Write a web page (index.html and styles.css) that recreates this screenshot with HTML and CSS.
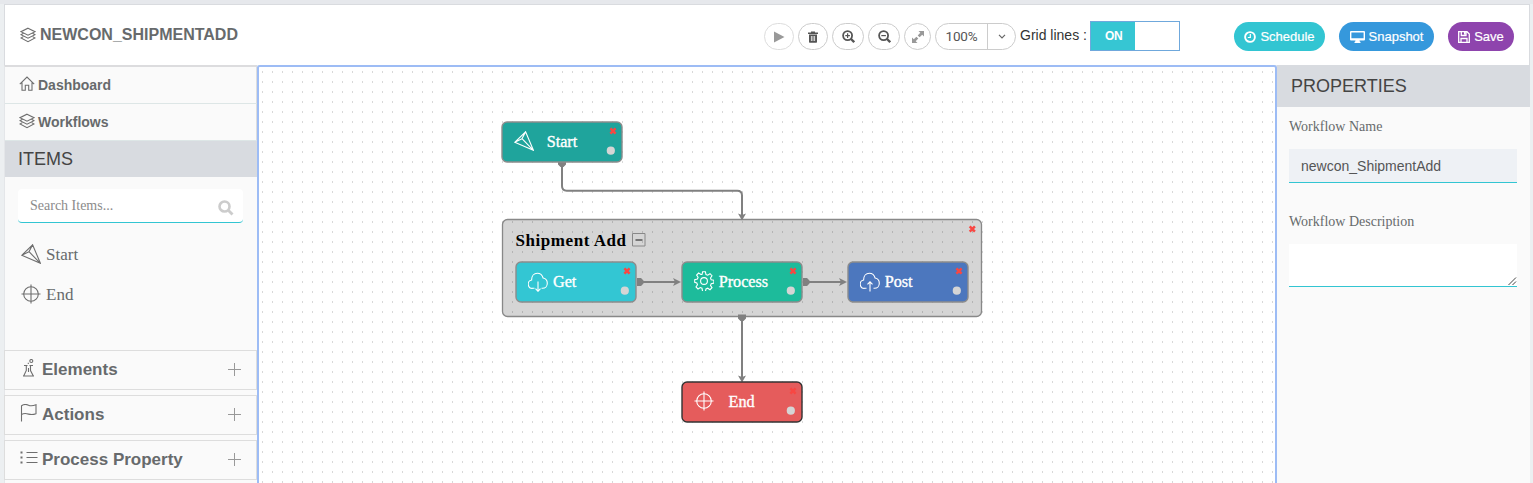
FILE: index.html
```html
<!DOCTYPE html>
<html lang="en">
<head>
<meta charset="utf-8">
<title>Workflow designer</title>
<link rel="stylesheet" href="styles.css">
</head>
<body>
<svg class="defs" width="0" height="0">
  <defs>
    <symbol id="layers" viewBox="0 0 16 16"><path d="M8 1.2 15 4.7 8 8.2 1 4.7ZM3.3 6.3 1 7.7 8 11.2l7-3.5-2.3-1.4M3.3 9.6 1 11 8 14.7l7-3.7-2.3-1.4"/></symbol>
    <symbol id="plane" viewBox="0 0 20 20"><path d="M.7 11.3 11.6.8 19.4 19.3ZM11.6.8 8 7.7 19.4 19.3M8 7.7.7 11.3"/></symbol>
    <symbol id="target" viewBox="0 0 20 20"><circle cx="10" cy="10" r="7.3"/><path d="M10 .5v19M.5 10h19"/></symbol>
    <symbol id="cloud-down" viewBox="0 0 20 20"><path d="M6.5 16.3H4.8A4.2 4.2 0 0 1 3.6 8C3.6 4 6 1.2 9.3 1.2c3 0 5 1.8 5.8 4.8 2.5.5 4.2 2.6 4.2 5.2 0 2.9-2 5.1-4.8 5.1h-1M10 9.5v9.7M7.5 16.7l2.5 2.6 2.5-2.6"/></symbol>
    <symbol id="cloud-up" viewBox="0 0 20 20"><path d="M6.500 16.3H4.8A4.2 4.2 0 0 1 3.6 8C3.6 4 6 1.2 9.3 1.2c3 0 5 1.8 5.8 4.8 2.5.5 4.2 2.6 4.2 5.2 0 2.9-2 5.1-4.8 5.1h-1M10 19.5V10M7.5 12.4 10 9.8l2.5 2.6"/></symbol>
    <symbol id="gear" viewBox="0 0 20 20"><circle cx="10" cy="10" r="3.4"/><path d="M8.6.8h2.8l.6 2.7 1.7.7 2.3-1.5 2 2-1.500 2.300.7 1.700 2.700.6v2.800l-2.700.6-.7 1.700 1.500 2.300-2 2-2.300-1.500-1.700.7-.6 2.700H8.600L8 17.200l-1.700-.7L4 18l-2-2 1.500-2.300-.7-1.700L.7 11.400V8.600L3.400 8l.7-1.700L2.600 4l2-2 2.300 1.500L8 3.500Z"/></symbol>
    <symbol id="cross" viewBox="0 0 8 8"><path d="M1.4 1.4 6.6 6.6M6.600 1.400 1.400 6.600" stroke="#f84743" stroke-width="2.5"/></symbol>
    <pattern id="grid" x="2" y="1" width="10" height="10" patternUnits="userSpaceOnUse"><rect width="1" height="2" fill="#d8d8d8"/></pattern>
  </defs>
</svg>
<div class="app">
  <header class="topbar">
    <h1 class="title"><svg class="line" width="16" height="16"><use href="#layers"/></svg>NEWCON_SHIPMENTADD</h1>
    <div class="tools">
      <button class="tool tool-faint"><svg width="12" height="12" viewBox="0 0 12 12"><path d="M1 .5 11.500 6 1 11.500Z" fill="#999"/></svg></button>
      <button class="tool"><svg width="12" height="12" viewBox="0 0 12 12"><path d="M4 1.500V.5h4v1h3V3H1V1.500ZM2 3.500h8V11q0 .7-.7.7H2.700Q2 11.700 2 11Z" fill="#555"/><path d="M4.400 5v5M6 5v5M7.600 5v5" stroke="#fff" stroke-width=".8"/></svg></button>
      <button class="tool tool-wide"><svg width="13" height="13" viewBox="0 0 13 13" fill="none" stroke="#555" stroke-width="1.800"><circle cx="5.600" cy="5.600" r="4.500"/><path d="m9 9 3.200 3.200" stroke-width="2.300"/><path d="M3.300 5.600h4.600M5.600 3.300v4.600" stroke-width="1.200"/></svg></button>
      <button class="tool tool-wide"><svg width="13" height="13" viewBox="0 0 13 13" fill="none" stroke="#555" stroke-width="1.800"><circle cx="5.600" cy="5.600" r="4.500"/><path d="m9 9 3.200 3.200" stroke-width="2.300"/><path d="M3.300 5.600h4.600" stroke-width="1.200"/></svg></button>
      <button class="tool tool-narrow"><svg width="12" height="12" viewBox="0 0 12 12"><path d="M6.500 0H12v5.500L10.200 3.700 7.600 6.300 5.700 4.400 8.300 1.800ZM5.500 12H0V6.500L1.800 8.300 4.400 5.700 6.300 7.600 3.700 10.200Z" fill="#999"/></svg></button>
      <div class="zoom"><span class="zoom-value">100%</span><span class="zoom-more"><svg width="8" height="5" viewBox="0 0 8 5"><path d="m1 .8 3 3 3-3" fill="none" stroke="#666" stroke-width="1.200"/></svg></span></div>
      <span class="grid-label">Grid lines :</span>
      <div class="toggle"><span class="toggle-on">ON</span></div>
    </div>
    <div class="actions">
      <button class="pill pill-schedule"><svg width="12" height="12" viewBox="0 0 12 12" fill="none" stroke="#fff"><circle cx="6" cy="6" r="4.900" stroke-width="1.900"/><path d="M6.300 3v3.500H3.800" stroke-width="1.200"/></svg>Schedule</button>
      <button class="pill pill-snapshot"><svg width="15" height="12" viewBox="0 0 15 12"><path d="M1 0h13q1 0 1 1v7.500q0 1-1 1H9.500q0 1.300 1 1.500v1h-6v-1q1-.2 1-1.500H1q-1 0-1-1V1q0-1 1-1ZM1.400 1.400v5.800h12.200V1.400Z" fill="#fff" fill-rule="evenodd"/></svg>Snapshot</button>
      <button class="pill pill-save"><svg width="12" height="12" viewBox="0 0 12 12" fill="none" stroke="#fff" stroke-width="1.300"><path d="M.7.7h8.300l2.300 2.300v8.300H.7ZM3 11V7.500h6V11M3.300 1v3.500h4.700V1M6.600 1v2.500"/></svg>Save</button>
    </div>
  </header>

  <aside class="sidebar">
    <a class="nav"><svg class="line" width="16" height="16" viewBox="0 0 16 16"><path d="M.8 8.200 8 1l7.200 7.200M3 6.500v7.800h3.300V9.300h3.400v5H13V6.500"/></svg>Dashboard</a>
    <a class="nav"><svg class="line" width="16" height="16"><use href="#layers"/></svg>Workflows</a>
    <h2 class="section items-head">ITEMS</h2>
    <div class="palette">
      <div class="search"><span>Search Items...</span><svg width="16" height="16" viewBox="0 0 16 16" fill="none" stroke="#ccc"><circle cx="6.500" cy="6.500" r="5" stroke-width="2.600"/><path d="m10.500 10.500 4 4" stroke-width="2.800"/></svg></div>
      <div class="item"><svg class="line" width="20" height="20"><use href="#plane"/></svg>Start</div>
      <div class="item"><svg class="line" width="20" height="20"><use href="#target"/></svg>End</div>
    </div>
    <div class="accordion">
      <div class="group"><svg class="line" width="18" height="18" viewBox="0 0 18 18"><path d="M4 6.500h3.500M9.500 6.500H13M6.300 6.500v5L3.800 16.800M10.500 6.500v5L13.200 16.800M3 17h11M8.500 9v4M8.300 3.800v1.200"/><circle cx="11.300" cy="2" r="1.500"/></svg><span>Elements</span><i class="plus"></i></div>
      <div class="group"><svg class="line" width="18" height="18" viewBox="0 0 18 18"><path d="M1.500 17.500V1.500M1.500 1.700C4 0 6.500.3 8.500 1.200s4 .9 7.500-.5v9c-3.500 1.400-5.500 1-7.500.4s-4.500-1-7 .4"/></svg><span>Actions</span><i class="plus"></i></div>
      <div class="group"><svg class="line" width="18" height="18" viewBox="0 0 18 18"><path d="M6.500 3.500h11M6.500 8.500h11M6.500 13.500h11"/><path d="M.5 3.500h2M.5 8.500h2M.5 13.500h2" stroke-width="2"/></svg><span>Process Property</span><i class="plus"></i></div>
    </div>
  </aside>

  <main class="canvas">
    <svg class="diagram" viewBox="259 67 1016 416">
      <rect x="259" y="67" width="1016" height="416" fill="url(#grid)"/>
      <rect x="502.500" y="219.500" width="479" height="97" rx="5" fill="#000" fill-opacity=".165" stroke="#888" stroke-width="1.300"/>
      <g class="links">
        <path d="M562 165v21q0 4.700 4.700 4.700h170.600q4.700 0 4.700 4.700V218M742 319v61M643 282h33M809 282h33"/>
      </g>
      <g fill="#808080">
        <path d="M558 160.500h8v4l-2.500 2.500h-3l-2.500-2.500ZM738 314.500h8v4l-2.500 2.500h-3l-2.500-2.500ZM637 278h4l2.500 2.500v3L641 286h-4ZM803 278h4l2.500 2.500v3L807 286h-4Z"/>
        <path d="M738 213.500l4 1.500 4-1.500-4 7ZM738 375.500l4 1.500 4-1.500-4 7ZM673 278l8 4-8 4 2-4ZM839 278l8 4-8 4 2-4Z"/>
      </g>
      <g stroke="#8c8c8c" stroke-width="1.400">
        <rect x="502" y="122" width="120" height="40" rx="5" fill="#1fa49c"/>
        <rect x="516" y="262" width="120" height="40" rx="5" fill="#33c6d3"/>
        <rect x="682" y="262" width="120" height="40" rx="5" fill="#1dbb9b"/>
        <rect x="848" y="262" width="120" height="40" rx="5" fill="#4c77be"/>
        <rect x="682" y="382" width="120" height="40" rx="5" fill="#e55c5c" stroke="#333"/>
      </g>
      <g class="node-icons">
        <use href="#plane" x="514" y="131" width="20" height="20"/>
        <use href="#cloud-down" x="528" y="272" width="20" height="20"/>
        <use href="#gear" x="694" y="271" width="20" height="20"/>
        <use href="#cloud-up" x="860" y="272" width="20" height="20"/>
        <use href="#target" x="694" y="391" width="20" height="20"/>
      </g>
      <g class="node-text">
        <text x="546.700" y="147">Start</text>
        <text x="553" y="287">Get</text>
        <text x="718.700" y="287">Process</text>
        <text x="884.700" y="287">Post</text>
        <text x="728.500" y="407">End</text>
      </g>
      <text class="group-text" x="515.500" y="246">Shipment Add</text>
      <path d="M632.500 233.500h12.500v12.500h-12.500Z" fill="none" stroke="#888"/>
      <path d="M635.500 240h7" stroke="#555" stroke-width="1.500"/>
      <g fill="#d5d5d5">
        <circle cx="610.800" cy="150.700" r="4.100"/><circle cx="624.800" cy="290.700" r="4.100"/><circle cx="790.800" cy="290.700" r="4.100"/><circle cx="956.800" cy="290.700" r="4.100"/><circle cx="790.800" cy="410.700" r="4.100"/>
      </g>
      <use href="#cross" x="609" y="127" width="8" height="8"/>
      <use href="#cross" x="623" y="267" width="8" height="8"/>
      <use href="#cross" x="789" y="267" width="8" height="8"/>
      <use href="#cross" x="955" y="267" width="8" height="8"/>
      <use href="#cross" x="968.300" y="225" width="8" height="8"/>
      <use href="#cross" x="789" y="387" width="8" height="8"/>
    </svg>
  </main>

  <aside class="properties">
    <h2 class="section">PROPERTIES</h2>
    <div class="form">
      <label class="label">Workflow Name</label>
      <div class="field">newcon_ShipmentAdd</div>
      <label class="label">Workflow Description</label>
      <div class="area"><svg width="9" height="9" viewBox="0 0 9 9"><path d="M.5 8l7.500-7.500M4.500 8l3.500-3.500" stroke="#444"/></svg></div>
    </div>
  </aside>
</div>
</body>
</html>
```
FILE: styles.css
```css
* { box-sizing: border-box; }
body {
  margin: 0;
  padding: 4px 3px 0 4px;
  height: 483px;
  overflow: hidden;
  background: linear-gradient(#e6e8ec 0 4px, #eceff1 4px);
  font-family: "Liberation Sans", Arial, sans-serif;
  color: #676a6c;
}
.defs { position: absolute; }
svg { display: block; flex: none; }
button { border: 0; padding: 0; font: inherit; }
.line { fill: none; stroke: #6e6e6e; stroke-width: 1.1; }

.app {
  display: grid;
  grid-template-columns: 253px 1020px 253px;
  grid-template-rows: 61px 418px;
}
.topbar {
  grid-column: 1 / -1;
  display: flex;
  align-items: center;
  background: #fff;
  border: 1px solid #d9dbdf;
  border-bottom: 0;
}
.title {
  display: flex;
  align-items: center;
  gap: 4px;
  width: 759px;
  margin: 0;
  padding-left: 15px;
  font-size: 16px;
  line-height: 20px;
}
.tools { display: flex; align-items: center; gap: 4px; width: 470px; padding-top: 3px; }
.tool {
  display: flex;
  align-items: center;
  justify-content: center;
  width: 30px;
  height: 27px;
  border: 1px solid #ccc;
  border-radius: 14px;
  background: #fff;
}
.tool-faint { border-color: #ddd; }
.tool-wide { width: 32px; }
.tool-narrow { width: 27px; }
.zoom {
  display: flex;
  width: 81px;
  height: 27px;
  border: 1px solid #ccc;
  border-radius: 14px;
  font: 13.5px/25px Roboto, sans-serif;
  letter-spacing: -.2px;
  color: #555;
}
.zoom-value { width: 52px; text-align: center; border-right: 1px solid #ccc; }
.zoom-more { display: flex; flex: 1; align-items: center; justify-content: center; }
.grid-label { width: 66px; font-size: 14px; line-height: 20px; color: #333; white-space: nowrap; margin-bottom: 3px; }
.toggle { width: 90px; height: 30px; margin-bottom: 1px; border: 1px solid #6fa8dc; background: #fff; }
.toggle-on {
  display: block;
  width: 44px;
  padding-left: 14px;
  background: #36c6d3;
  color: #fff;
  font-weight: bold;
  font-size: 12px;
  letter-spacing: -.3px;
  line-height: 28px;
}
.actions { display: flex; gap: 14px; padding-top: 3px; }
.pill {
  display: flex;
  align-items: center;
  justify-content: center;
  gap: 4px;
  height: 29px;
  border-radius: 15px;
  color: #fff;
  font-size: 13px;
  -webkit-text-stroke: .2px #fff;
}
.pill-schedule { width: 91px; background: #32c5d2; }
.pill-snapshot { width: 95px; background: #3598dc; }
.pill-save { width: 66px; background: #8e44ad; }

.sidebar {
  border-top: 2px solid #dcdcde;
  border-left: 1px solid #e4e6e9;
  background: #fafafa;
}
.nav {
  display: flex;
  align-items: center;
  gap: 3px;
  height: 37px;
  padding-left: 14px;
  border-bottom: 1px solid #dde6e6;
  border-right: 1px solid #ddd;
  font-size: 14px;
  font-weight: bold;
}
.nav svg { margin-bottom: 2px; }
.section {
  height: 42px;
  margin: 0;
  padding-left: 14px;
  background: #d8dbe0;
  color: #444;
  font-size: 18px;
  font-weight: normal;
  line-height: 42px;
}
.items-head { height: 36px; padding-left: 13px; line-height: 36px; }
.palette {
  height: 173px;
  padding: 12px 14px 0 13px;
  font-family: "Liberation Serif", serif;
}
.search {
  display: flex;
  justify-content: space-between;
  height: 34px;
  margin-bottom: 12px;
  padding: 0 9px 0 12px;
  border-bottom: 1px solid #32c5d2;
  border-radius: 4px;
  background: #fff;
  color: #8b8b8b;
  font-size: 14px;
  line-height: 33px;
}
.search svg { margin-top: 11px; }
.item { display: flex; align-items: center; gap: 5px; height: 40px; padding-left: 3px; font-size: 17px; }
.item svg { margin-bottom: 2px; }
.accordion { display: grid; gap: 5px; margin-left: -1px; }
.group {
  display: flex;
  align-items: center;
  height: 40px;
  padding: 0 15px 0 15px;
  border: 1px solid #ddd;
  font-size: 17px;
  font-weight: bold;
}
.group span { flex: 1; padding-left: 4px; }
.group svg { margin-bottom: 4px; }
.plus {
  width: 13px;
  height: 13px;
  margin-bottom: 1px;
  background: linear-gradient(#999, #999) 0 6px / 13px 1px no-repeat, linear-gradient(#999, #999) 6px 0 / 1px 13px no-repeat;
}

.canvas { border: 2px solid #9dbcf5; border-bottom: 0; border-radius: 3px 3px 0 0; background: #fff; }
.diagram { width: 1016px; height: 416px; }
.links { fill: none; stroke: #808080; stroke-width: 2; }
.node-icons { fill: none; stroke: #fff; stroke-width: 1.1; }
.node-text { font: 16.2px "Liberation Serif", serif; fill: #fff; stroke: #fff; stroke-width: .35px; }
.group-text { font: bold 17px "Liberation Serif", serif; letter-spacing: .56px; fill: #000; }

.properties { background: #fafafa; }
.form { display: flex; flex-direction: column; padding: 11px 13px 0 12px; }
.label { font: 14px/18px "Liberation Serif", serif; }
.field {
  height: 34px;
  margin: 13px 0 30px;
  padding-left: 12px;
  background: #eef1f5;
  border-bottom: 1px solid #32c5d2;
  color: #555;
  font-size: 14px;
  line-height: 34px;
}
.area {
  display: flex;
  align-items: flex-end;
  justify-content: flex-end;
  height: 43px;
  margin-top: 13px;
  border-bottom: 1px solid #32c5d2;
  background: #fff;
}
```
